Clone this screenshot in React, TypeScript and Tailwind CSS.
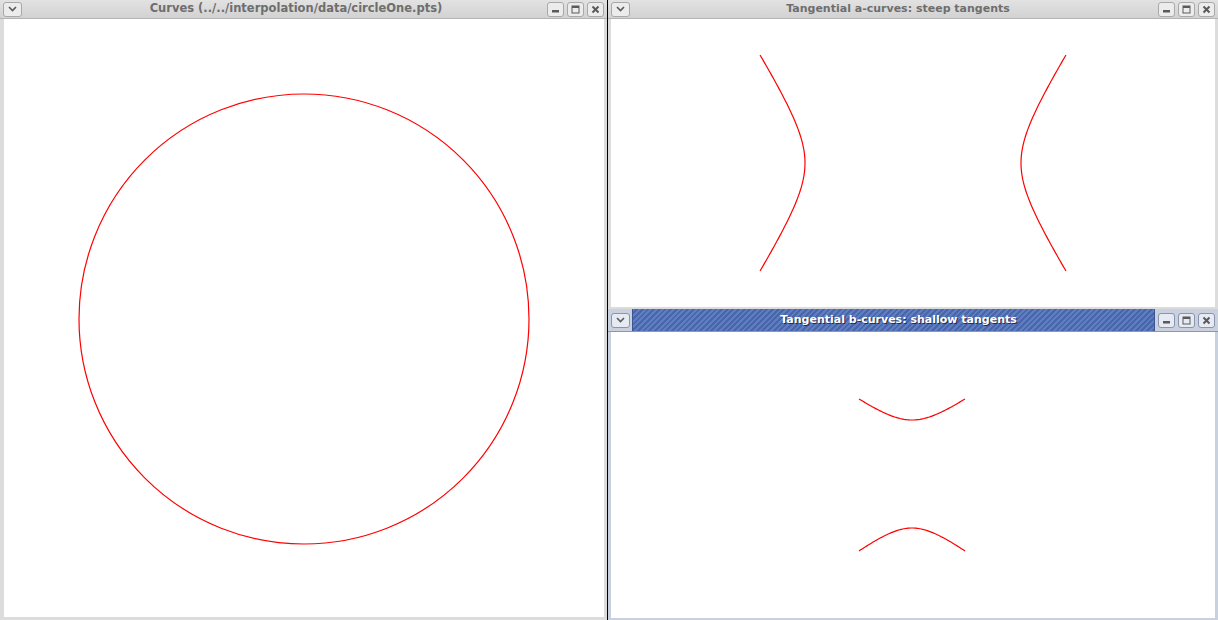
import React from "react";

const font = { fontFamily: '"DejaVu Sans", "Liberation Sans", sans-serif' };

// hyperbola arms sampled into a polyline
function arm(
  n: number,
  half: number,
  a: number,
  s: number,
  map: (t: number, d: number) => [number, number]
) {
  const pts: string[] = [];
  for (let i = 0; i <= n; i++) {
    const t = -half + (2 * half * i) / n;
    const d = Math.sqrt(a * a + s * s * t * t) - a;
    const [x, y] = map(t, d);
    pts.push(`${x.toFixed(2)},${y.toFixed(2)}`);
  }
  return "M" + pts.join(" L");
}

function MenuBtn({ active }: { active?: boolean }) {
  return (
    <div
      className={`flex h-[15px] w-[19px] items-center justify-center rounded-[3px] border ${
        active ? "border-[#8a94ac] bg-[#e6eaf2]" : "border-[#a9a9a9] bg-[#ececec]"
      }`}
    >
      <svg width="9" height="6" viewBox="0 0 9 6">
        <path d="M1 1 L4.5 4.5 L8 1" fill="none" stroke="#5a5a5a" strokeWidth="1.6" />
      </svg>
    </div>
  );
}

function CtlBtns({ active }: { active?: boolean }) {
  const cls = `flex h-[15px] w-[17px] items-center justify-center rounded-[3px] border ${
    active ? "border-[#8a94ac] bg-[#e6eaf2]" : "border-[#a9a9a9] bg-[#ececec]"
  }`;
  return (
    <div className="flex gap-[3px]">
      <div className={cls}>
        <svg width="9" height="9" viewBox="0 0 9 9">
          <rect x="1" y="5" width="7" height="2.5" fill="#5a5a5a" />
        </svg>
      </div>
      <div className={cls}>
        <svg width="9" height="9" viewBox="0 0 9 9">
          <rect x="1" y="1" width="7" height="7" fill="none" stroke="#5a5a5a" strokeWidth="1" />
          <rect x="1" y="1" width="7" height="2" fill="#5a5a5a" />
        </svg>
      </div>
      <div className={cls}>
        <svg width="9" height="9" viewBox="0 0 9 9">
          <path d="M1.5 1.5 L7.5 7.5 M7.5 1.5 L1.5 7.5" stroke="#5a5a5a" strokeWidth="2" />
        </svg>
      </div>
    </div>
  );
}

function TitleBar({
  title,
  active,
  shift = 0,
  size = "text-[11.5px]",
}: {
  title: string;
  active?: boolean;
  shift?: number;
  size?: string;
}) {
  if (active) {
    return (
      <div className="flex h-[23px] items-center border-b border-[#8c96ae] bg-[#c9d0de]">
        <div className="flex w-[24px] justify-center">
          <MenuBtn active />
        </div>
        <div
          className="flex h-full flex-1 items-center justify-center border-x border-[#3d5590] bg-[repeating-linear-gradient(135deg,#5f7ec2_0px,#5f7ec2_2px,#4966aa_2px,#4966aa_4px)]"
          style={{ paddingLeft: shift }}
        >
          <span
            className={`${size} font-bold text-white [text-shadow:1px_1px_0_#1e2d55]`}
            style={font}
          >
            {title}
          </span>
        </div>
        <div className="flex px-[3px]">
          <CtlBtns active />
        </div>
      </div>
    );
  }
  return (
    <div className="flex h-[19px] items-center border-b border-[#b4b4b4] bg-gradient-to-b from-[#e2e2e2] to-[#d2d2d2]">
      <div className="flex w-[24px] justify-center">
        <MenuBtn />
      </div>
      <div className="flex flex-1 justify-center" style={{ paddingLeft: shift }}>
        <span className={`${size} font-bold text-[#6e6e6e]`} style={font}>
          {title}
        </span>
      </div>
      <div className="flex px-[3px]">
        <CtlBtns />
      </div>
    </div>
  );
}

export default function App() {
  const red = "#ff0000";
  const aLeft = arm(80, 108, 30, 0.636, (t, d) => [194 - d, 144 + t]);
  const aRight = arm(80, 108, 30, 0.636, (t, d) => [410 + d, 144 + t]);
  const bTop = arm(80, 53, 25, 0.73, (t, d) => [301 + t, 88 - d]);
  const bBot = arm(80, 53, 25, 0.773, (t, d) => [301 + t, 196 + d]);

  return (
    <div className="flex h-[620px] w-[1218px] overflow-hidden bg-black">
      {/* left window */}
      <div className="flex h-full w-[607px] flex-col bg-[#dcdcdc]">
        <TitleBar title="Curves (../../interpolation/data/circleOne.pts)" shift={24} />
        <div className="ml-[4px] mr-[3px] mb-[3px] flex-1 bg-white">
          <svg width="600" height="598" viewBox="0 0 600 598">
            <circle cx="300" cy="300" r="225" fill="none" stroke={red} strokeWidth="1.2" />
          </svg>
        </div>
      </div>
      <div className="w-[1px]" />
      {/* right column */}
      <div className="flex h-full flex-1 flex-col">
        <div className="flex h-[309px] flex-col bg-[#dcdcdc]">
          <TitleBar title="Tangential a-curves: steep tangents" shift={9} size="text-[11px]" />
          <div className="ml-[3px] mr-[3px] mb-[2px] flex-1 bg-white">
            <svg width="604" height="288" viewBox="0 0 604 288">
              <path d={aLeft} fill="none" stroke={red} strokeWidth="1.2" />
              <path d={aRight} fill="none" stroke={red} strokeWidth="1.2" />
            </svg>
          </div>
        </div>
        <div className="h-[1px]" />
        <div className="flex flex-1 flex-col bg-[#c9d0de]">
          <TitleBar title="Tangential b-curves: shallow tangents" active shift={10} size="text-[11px]" />
          <div className="ml-[3px] mr-[3px] mb-[3px] flex-1 bg-white">
            <svg width="604" height="286" viewBox="0 0 604 286">
              <path d={bTop} fill="none" stroke={red} strokeWidth="1.2" />
              <path d={bBot} fill="none" stroke={red} strokeWidth="1.2" />
            </svg>
          </div>
        </div>
      </div>
    </div>
  );
}
